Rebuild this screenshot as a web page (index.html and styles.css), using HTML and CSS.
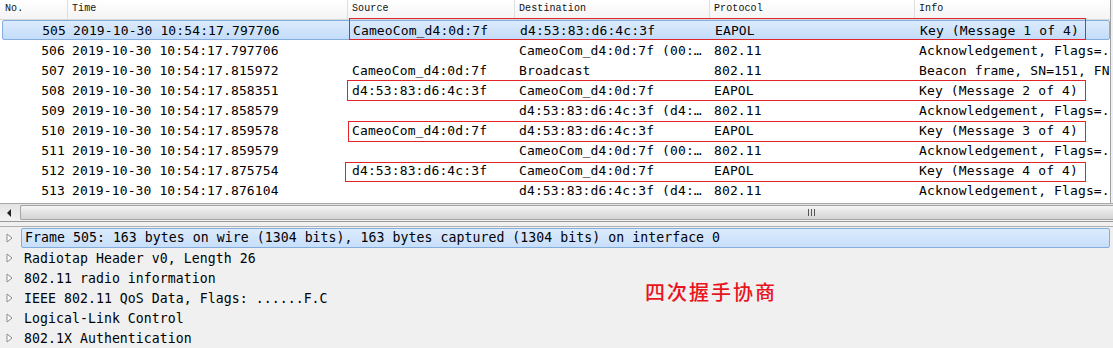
FILE: index.html
```html
<!DOCTYPE html>
<html>
<head>
<meta charset="utf-8">
<link rel="stylesheet" href="styles.css">
</head>
<body>
<div class="app">
  <div class="packet-list">
    <div class="row head">
      <div class="c no">No.</div>
      <div class="c">Time</div>
      <div class="c">Source</div>
      <div class="c">Destination</div>
      <div class="c">Protocol</div>
      <div class="c last">Info</div>
    </div>
    <div class="row sel">
      <div class="c no">505</div><div class="c">2019-10-30 10:54:17.797706</div><div class="c">CameoCom_d4:0d:7f</div><div class="c">d4:53:83:d6:4c:3f</div><div class="c">EAPOL</div><div class="c">Key (Message 1 of 4)</div>
    </div>
    <div class="row">
      <div class="c no">506</div><div class="c">2019-10-30 10:54:17.797706</div><div class="c"></div><div class="c">CameoCom_d4:0d:7f (00:…</div><div class="c">802.11</div><div class="c">Acknowledgement, Flags=.</div>
    </div>
    <div class="row">
      <div class="c no">507</div><div class="c">2019-10-30 10:54:17.815972</div><div class="c">CameoCom_d4:0d:7f</div><div class="c">Broadcast</div><div class="c">802.11</div><div class="c">Beacon frame, SN=151, FN</div>
    </div>
    <div class="row">
      <div class="c no">508</div><div class="c">2019-10-30 10:54:17.858351</div><div class="c">d4:53:83:d6:4c:3f</div><div class="c">CameoCom_d4:0d:7f</div><div class="c">EAPOL</div><div class="c">Key (Message 2 of 4)</div>
    </div>
    <div class="row">
      <div class="c no">509</div><div class="c">2019-10-30 10:54:17.858579</div><div class="c"></div><div class="c">d4:53:83:d6:4c:3f (d4:…</div><div class="c">802.11</div><div class="c">Acknowledgement, Flags=.</div>
    </div>
    <div class="row">
      <div class="c no">510</div><div class="c">2019-10-30 10:54:17.859578</div><div class="c">CameoCom_d4:0d:7f</div><div class="c">d4:53:83:d6:4c:3f</div><div class="c">EAPOL</div><div class="c">Key (Message 3 of 4)</div>
    </div>
    <div class="row">
      <div class="c no">511</div><div class="c">2019-10-30 10:54:17.859579</div><div class="c"></div><div class="c">CameoCom_d4:0d:7f (00:…</div><div class="c">802.11</div><div class="c">Acknowledgement, Flags=.</div>
    </div>
    <div class="row">
      <div class="c no">512</div><div class="c">2019-10-30 10:54:17.875754</div><div class="c">d4:53:83:d6:4c:3f</div><div class="c">CameoCom_d4:0d:7f</div><div class="c">EAPOL</div><div class="c">Key (Message 4 of 4)</div>
    </div>
    <div class="row">
      <div class="c no">513</div><div class="c">2019-10-30 10:54:17.876104</div><div class="c"></div><div class="c">d4:53:83:d6:4c:3f (d4:…</div><div class="c">802.11</div><div class="c">Acknowledgement, Flags=.</div>
    </div>
    <div class="mark m1"></div>
    <div class="mark m2"></div>
    <div class="mark m3"></div>
    <div class="mark m4"></div>
  </div>
  <div class="hscroll">
    <div class="arrow"><svg width="5" height="8" viewBox="0 0 5 8"><path d="M4 0 L0 4 L4 8 Z" fill="#222"/></svg></div>
    <div class="thumb"><span class="grip"><i></i><i></i><i></i></span></div>
  </div>
  <div class="splitter"></div>
  <div class="details">
    <div class="drow dsel"><span class="tri"><svg width="7" height="10" viewBox="0 0 7 10"><path d="M1 1 L6 5 L1 9 Z" fill="#fff" stroke="#8a8a8a" stroke-width="1"/></svg></span><span class="dtext">Frame 505: 163 bytes on wire (1304 bits), 163 bytes captured (1304 bits) on interface 0</span></div>
    <div class="drow"><span class="tri"><svg width="7" height="10" viewBox="0 0 7 10"><path d="M1 1 L6 5 L1 9 Z" fill="#fff" stroke="#8a8a8a" stroke-width="1"/></svg></span><span class="dtext">Radiotap Header v0, Length 26</span></div>
    <div class="drow"><span class="tri"><svg width="7" height="10" viewBox="0 0 7 10"><path d="M1 1 L6 5 L1 9 Z" fill="#fff" stroke="#8a8a8a" stroke-width="1"/></svg></span><span class="dtext">802.11 radio information</span></div>
    <div class="drow"><span class="tri"><svg width="7" height="10" viewBox="0 0 7 10"><path d="M1 1 L6 5 L1 9 Z" fill="#fff" stroke="#8a8a8a" stroke-width="1"/></svg></span><span class="dtext">IEEE 802.11 QoS Data, Flags: ......F.C</span></div>
    <div class="drow"><span class="tri"><svg width="7" height="10" viewBox="0 0 7 10"><path d="M1 1 L6 5 L1 9 Z" fill="#fff" stroke="#8a8a8a" stroke-width="1"/></svg></span><span class="dtext">Logical-Link Control</span></div>
    <div class="drow"><span class="tri"><svg width="7" height="10" viewBox="0 0 7 10"><path d="M1 1 L6 5 L1 9 Z" fill="#fff" stroke="#8a8a8a" stroke-width="1"/></svg></span><span class="dtext">802.1X Authentication</span></div>
    <div class="note">四次握手协商</div>
  </div>
</div>
</body>
</html>
```

FILE: styles.css
```css
html, body {
  margin: 0;
  padding: 0;
  background: #f0f0f0;
}
.app {
  width: 1113px;
  height: 348px;
  overflow: hidden;
  font-family: "DejaVu Sans Mono", "Liberation Mono", monospace;
  font-size: 13px;
  letter-spacing: 0.12px;
  color: #000;
}
.packet-list {
  position: relative;
  background: #fff;
  height: 203px;
  width: 1110px;
  border-right: 1px solid #a0a0a0;
}
.row {
  display: grid;
  grid-template-columns: 68px 280px 167px 195px 205px 195px;
  height: 20px;
  line-height: 21px;
  white-space: nowrap;
  box-sizing: border-box;
}
.c {
  overflow: hidden;
  padding-left: 4px;
}
.c.no {
  text-align: right;
  padding-left: 0;
  padding-right: 3px;
}
.head {
  height: 20px;
  line-height: 18px;
  background: linear-gradient(#ffffff, #f4f4f4);
  border-bottom: 1px solid #d8d8d8;
  font-family: "Liberation Mono", monospace;
  font-size: 10px;
  letter-spacing: 0.1px;
  color: #111;
}
.head .c {
  border-right: 1px solid #dedede;
  padding-left: 4px;
}
.head .c.no {
  text-align: left;
  padding-left: 5px;
}
.head .c.last {
  border-right: none;
}
.sel {
  margin: 0 0 0 2px;
  width: 1108px;
  grid-template-columns: 66px 280px 167px 195px 205px 195px;
  background: linear-gradient(#dcebfc, #c3dcfa);
  border: 1px solid #84acdd;
  border-radius: 2px;
  line-height: 19px;
}
.mark {
  position: absolute;
  border: 1px solid #e3242b;
  box-sizing: border-box;
}
.m1 { left: 349px; top: 18px; width: 737px; height: 22px; }
.m2 { left: 347px; top: 80px; width: 739px; height: 21px; }
.m3 { left: 348px; top: 121px; width: 738px; height: 21px; }
.m4 { left: 345px; top: 162px; width: 741px; height: 20px; }
.hscroll {
  display: flex;
  height: 17px;
  background: linear-gradient(#e3e3e3, #f2f2f2);
  border-top: 1px solid #a8a8a8;
  border-bottom: 1px solid #9a9a9a;
}
.arrow {
  width: 19px;
  display: flex;
  align-items: center;
  justify-content: center;
}
.thumb {
  flex: 1;
  margin: 1px 0 1px 1px;
  border: 1px solid #a5a5a5;
  border-right: none;
  border-radius: 2px 0 0 2px;
  background: linear-gradient(#f6f6f6, #e2e2e2 50%, #d4d4d4);
  position: relative;
}
.grip {
  position: absolute;
  left: 787px;
  top: 3px;
  display: flex;
  gap: 2px;
}
.grip i {
  display: block;
  width: 1px;
  height: 7px;
  background: #555;
}
.splitter {
  height: 4px;
  background: #f0f0f0;
  border-bottom: 1px solid #b0b0b0;
}
.details {
  position: relative;
  background: #f0f0f0;
  padding-top: 1px;
  font-size: 13.2px;
  letter-spacing: 0.05px;
}
.drow {
  display: flex;
  align-items: center;
  height: 20px;
  white-space: nowrap;
}
.tri {
  width: 21px;
  flex: none;
  display: flex;
  align-items: center;
  padding-left: 6px;
  box-sizing: border-box;
  align-self: stretch;
}
.dtext {
  padding-left: 3px;
  line-height: 19px;
}
.dsel .dtext {
  flex: 1;
  background: linear-gradient(#dcebfc, #c7defa);
  border: 1px solid #84acdd;
  border-radius: 2px;
  margin-right: 3px;
  line-height: 18px;
}
.note {
  position: absolute;
  left: 645px;
  top: 53px;
  font-family: "Noto Sans CJK SC", sans-serif;
  font-size: 20px;
  font-weight: 500;
  color: #e8141e;
  letter-spacing: 2px;
  line-height: 24px;
}
```
